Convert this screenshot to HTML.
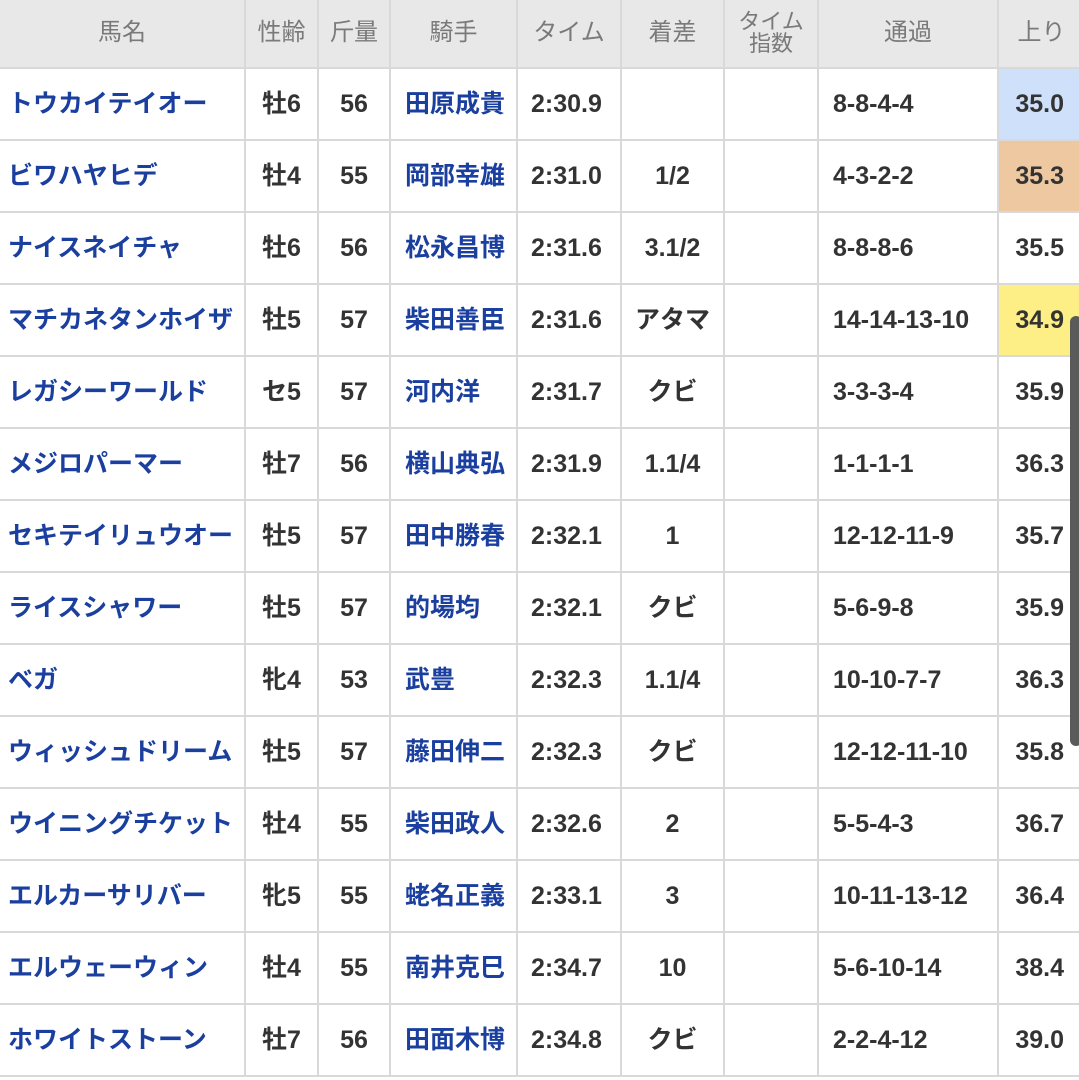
<!DOCTYPE html>
<html><head><meta charset="utf-8"><style>
body{margin:0;width:1079px;height:1080px;overflow:hidden;background:#fff;font-family:"Liberation Sans","Noto Sans CJK JP",sans-serif;}
table{border-collapse:collapse;table-layout:fixed;width:1086px;position:absolute;left:-2px;top:-4px;}
td,th{border:2px solid #d9d9d9;height:70px;padding:0;font-size:25px;line-height:30px;font-weight:bold;color:#333;white-space:nowrap;overflow:hidden;vertical-align:middle;}
th{background:#e8e8e8;color:#7a7a7a;font-weight:normal;height:69px;text-align:center;font-size:24px;}
th.two{font-size:22px;line-height:22px;}
td.n{color:#1a3f9e;padding-left:8px;}
td.j{color:#1a3f9e;padding-left:14px;}
td.c{text-align:center;}
td.t{padding-left:13px;}
td.p{padding-left:14px;}
td.u{text-align:right;padding-right:20px;}
.b{background:#cfe0fb}.o{background:#eec8a0}.y{background:#fdef85}
.sb{position:absolute;left:1070px;top:316px;width:12px;height:430px;background:#5a5a5a;border-radius:6px;}
</style></head><body>
<table>
<colgroup><col style="width:246px"><col style="width:73px"><col style="width:72px"><col style="width:127px"><col style="width:104px"><col style="width:103px"><col style="width:94px"><col style="width:180px"><col style="width:87px"></colgroup>
<tr><th>馬名</th><th>性齢</th><th>斤量</th><th>騎手</th><th>タイム</th><th>着差</th><th class="two">タイム<br>指数</th><th>通過</th><th>上り</th></tr>
<tr><td class="n">トウカイテイオー</td><td class="c">牡6</td><td class="c">56</td><td class="j">田原成貴</td><td class="t">2:30.9</td><td class="c"></td><td></td><td class="p">8-8-4-4</td><td class="u b">35.0</td></tr>
<tr><td class="n">ビワハヤヒデ</td><td class="c">牡4</td><td class="c">55</td><td class="j">岡部幸雄</td><td class="t">2:31.0</td><td class="c">1/2</td><td></td><td class="p">4-3-2-2</td><td class="u o">35.3</td></tr>
<tr><td class="n">ナイスネイチャ</td><td class="c">牡6</td><td class="c">56</td><td class="j">松永昌博</td><td class="t">2:31.6</td><td class="c">3.1/2</td><td></td><td class="p">8-8-8-6</td><td class="u">35.5</td></tr>
<tr><td class="n">マチカネタンホイザ</td><td class="c">牡5</td><td class="c">57</td><td class="j">柴田善臣</td><td class="t">2:31.6</td><td class="c">アタマ</td><td></td><td class="p">14-14-13-10</td><td class="u y">34.9</td></tr>
<tr><td class="n">レガシーワールド</td><td class="c">セ5</td><td class="c">57</td><td class="j">河内洋</td><td class="t">2:31.7</td><td class="c">クビ</td><td></td><td class="p">3-3-3-4</td><td class="u">35.9</td></tr>
<tr><td class="n">メジロパーマー</td><td class="c">牡7</td><td class="c">56</td><td class="j">横山典弘</td><td class="t">2:31.9</td><td class="c">1.1/4</td><td></td><td class="p">1-1-1-1</td><td class="u">36.3</td></tr>
<tr><td class="n">セキテイリュウオー</td><td class="c">牡5</td><td class="c">57</td><td class="j">田中勝春</td><td class="t">2:32.1</td><td class="c">1</td><td></td><td class="p">12-12-11-9</td><td class="u">35.7</td></tr>
<tr><td class="n">ライスシャワー</td><td class="c">牡5</td><td class="c">57</td><td class="j">的場均</td><td class="t">2:32.1</td><td class="c">クビ</td><td></td><td class="p">5-6-9-8</td><td class="u">35.9</td></tr>
<tr><td class="n">ベガ</td><td class="c">牝4</td><td class="c">53</td><td class="j">武豊</td><td class="t">2:32.3</td><td class="c">1.1/4</td><td></td><td class="p">10-10-7-7</td><td class="u">36.3</td></tr>
<tr><td class="n">ウィッシュドリーム</td><td class="c">牡5</td><td class="c">57</td><td class="j">藤田伸二</td><td class="t">2:32.3</td><td class="c">クビ</td><td></td><td class="p">12-12-11-10</td><td class="u">35.8</td></tr>
<tr><td class="n">ウイニングチケット</td><td class="c">牡4</td><td class="c">55</td><td class="j">柴田政人</td><td class="t">2:32.6</td><td class="c">2</td><td></td><td class="p">5-5-4-3</td><td class="u">36.7</td></tr>
<tr><td class="n">エルカーサリバー</td><td class="c">牝5</td><td class="c">55</td><td class="j">蛯名正義</td><td class="t">2:33.1</td><td class="c">3</td><td></td><td class="p">10-11-13-12</td><td class="u">36.4</td></tr>
<tr><td class="n">エルウェーウィン</td><td class="c">牡4</td><td class="c">55</td><td class="j">南井克巳</td><td class="t">2:34.7</td><td class="c">10</td><td></td><td class="p">5-6-10-14</td><td class="u">38.4</td></tr>
<tr><td class="n">ホワイトストーン</td><td class="c">牡7</td><td class="c">56</td><td class="j">田面木博</td><td class="t">2:34.8</td><td class="c">クビ</td><td></td><td class="p">2-2-4-12</td><td class="u">39.0</td></tr>
</table>
<div class="sb"></div>
</body></html>
